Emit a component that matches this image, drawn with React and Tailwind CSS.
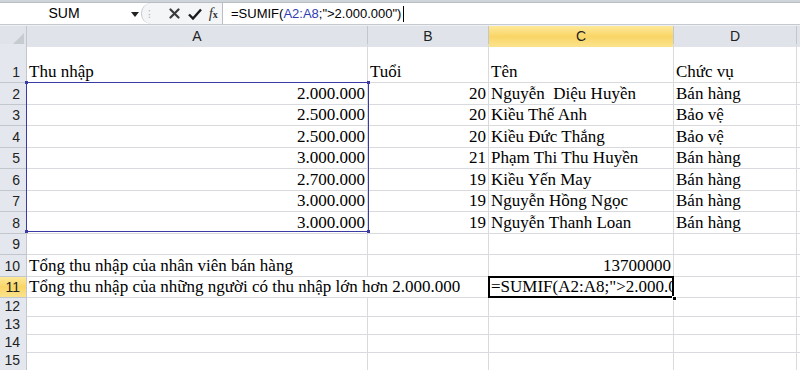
import React from 'react';

const COLS = 'grid grid-cols-[27px_341px_121px_185px_123px_1fr]';
const serif = { fontFamily: '"Liberation Serif", "Times New Roman", serif' };
const sans = { fontFamily: '"Liberation Sans", Arial, sans-serif' };

const rows = [
  { n: 1, h: 'h-[39px]', a: 'Thu nhập', b: 'Tuổi', bLeft: true, c: 'Tên', d: 'Chức vụ', aLeft: true },
  { n: 2, a: '2.000.000', b: '20', c: 'Nguyễn  Diệu Huyền', d: 'Bán hàng' },
  { n: 3, a: '2.500.000', b: '20', c: 'Kiều Thế Anh', d: 'Bảo vệ' },
  { n: 4, a: '2.500.000', b: '20', c: 'Kiều Đức Thắng', d: 'Bảo vệ' },
  { n: 5, a: '3.000.000', b: '21', c: 'Phạm Thi Thu Huyền', d: 'Bán hàng' },
  { n: 6, a: '2.700.000', b: '19', c: 'Kiều Yến May', d: 'Bán hàng' },
  { n: 7, a: '3.000.000', b: '19', c: 'Nguyễn Hồng Ngọc', d: 'Bán hàng' },
  { n: 8, a: '3.000.000', b: '19', c: 'Nguyễn Thanh Loan', d: 'Bán hàng' },
  { n: 9 },
  { n: 10, a: 'Tổng thu nhập của nhân viên bán hàng', aLeft: true, c: '13700000', cRight: true },
];

const Cell = ({ children, right, className = '' }) => (
  <div
    className={`border-r border-b border-[#d8dadd] flex items-end overflow-hidden whitespace-pre text-[17px] leading-[19px] text-black px-[2px] pb-[1px] ${right ? 'justify-end' : 'justify-start'} ${className}`}
    style={serif}
  >
    {children}
  </div>
);

const RowHead = ({ n, active }) => (
  <div
    className={`border-r border-b border-[#c2c7ce] flex items-end justify-end pr-[6px] pb-[1px] text-[14px] leading-[17px] text-[#222] ${active ? 'bg-gradient-to-b from-[#fde999] via-[#f9d565] to-[#fbe38c]' : 'bg-[#e4e8ee]'}`}
    style={sans}
  >
    {n}
  </div>
);

const ColHead = ({ label, active }) => (
  <div
    className={`border-r border-[#c2c7ce] flex items-center justify-center text-[14px] text-[#222] ${active ? 'bg-gradient-to-b from-[#fde999] via-[#f9d565] to-[#fbe38c]' : 'bg-[#e0e4ea]'}`}
    style={sans}
  >
    {label}
  </div>
);

function FormulaBar() {
  return (
    <div className="bg-white">
      <div className="h-[3px] bg-[#cfd4da] border-b border-[#b9bec5]" />
      <div className="flex h-[21px] items-stretch">
        <div className="w-[141px] flex items-center relative bg-white">
          <span className="w-[128px] text-center text-[14px] text-black" style={sans}>SUM</span>
          <svg width="8" height="5" viewBox="0 0 8 5" className="absolute left-[131px] top-[9px]">
            <path d="M0 0 L8 0 L4 5 Z" fill="#222" />
          </svg>
        </div>
        <div className="w-[81px] flex items-center bg-[#f4f5f7] border-l border-[#c5cad0] rounded-l-[10px] relative">
          <span className="ml-[6px] text-[10px] text-[#b0b4ba] leading-none">⁝</span>
          <svg width="11" height="11" viewBox="0 0 11 11" className="ml-[18px]">
            <path d="M1.5 1.5 L9.5 9.5 M9.5 1.5 L1.5 9.5" stroke="#3a3a3a" strokeWidth="2.2" strokeLinecap="round" />
          </svg>
          <svg width="14" height="12" viewBox="0 0 14 12" className="ml-[8px]">
            <path d="M1 6.5 L5 10.5 L13 1.5" stroke="#1a1a1a" strokeWidth="2.4" fill="none" />
          </svg>
          <span className="ml-[7px] italic text-[15px] leading-none text-[#333]" style={serif}>
            f<span className="text-[10px] not-italic font-bold">x</span>
          </span>
        </div>
        <div className="flex-1 border-l border-[#b9bec5] flex items-center pl-[8px] relative">
          <span className="text-[13px] text-black whitespace-pre" style={sans}>
            =SUMIF(<span className="text-[#2e3db5]">A2:A8</span>;"&gt;2.000.000")
          </span>
          <span className="w-px h-[16px] bg-black ml-[2px]" />
        </div>
      </div>
      <div className="h-px bg-[#c5cad0]" />
    </div>
  );
}

export default function App() {
  return (
    <div className="w-[800px] h-[370px] overflow-hidden bg-white">
      <FormulaBar />
      <div className="h-[1px] bg-[#eef0f3]" />
      <div className={`${COLS} h-[18px] border-b border-[#b5bbc3]`}>
        <div className="border-r border-[#c2c7ce] bg-[#e0e4ea] relative">
          <svg width="12" height="12" viewBox="0 0 12 12" className="absolute right-[2px] bottom-[2px]">
            <path d="M12 0 L12 12 L0 12 Z" fill="#c6cbd2" />
          </svg>
        </div>
        <ColHead label="A" />
        <ColHead label="B" />
        <ColHead label="C" active />
        <ColHead label="D" />
        <div className="bg-[#e0e4ea]" />
      </div>

      <div className="relative">
        {rows.map((r) => (
          <div key={r.n} className={`${COLS} ${r.h || 'h-[21.5px]'}`}>
            <RowHead n={r.n} />
            <Cell right={!r.aLeft}>{r.a}</Cell>
            <Cell right={!r.bLeft}>{r.b}</Cell>
            <Cell right={r.cRight}>{r.c}</Cell>
            <Cell>{r.d}</Cell>
            <Cell />
          </div>
        ))}

        <div className="grid grid-cols-[27px_462px_185px_123px_1fr] h-[21.5px]">
          <RowHead n={11} active />
          <Cell>Tổng thu nhập của những người có thu nhập lớn hơn 2.000.000</Cell>
          <div className="relative">
            <Cell className="h-full">=SUMIF(A2:A8;"&gt;2.000.0</Cell>
            <div className="absolute left-[-1px] top-[-1px] right-0 bottom-0 border-2 border-black" />
            <div className="absolute right-[-3px] bottom-[-3px] w-[5px] h-[5px] bg-black border border-white" />
          </div>
          <Cell />
          <Cell />
        </div>

        {[12, 13, 14, 15].map((n) => (
          <div key={n} className={`${COLS} h-[18px]`}>
            <RowHead n={n} />
            <Cell />
            <Cell />
            <Cell />
            <Cell />
            <Cell />
          </div>
        ))}

        <div className="absolute left-[26px] top-[38px] w-[343px] h-[150px] border border-[#3b3ba6] pointer-events-none">
          <div className="absolute left-[-2px] top-[-2px] w-[3px] h-[3px] bg-[#3b3ba6]" />
          <div className="absolute right-[-2px] top-[-2px] w-[3px] h-[3px] bg-[#3b3ba6]" />
          <div className="absolute left-[-2px] bottom-[-2px] w-[3px] h-[3px] bg-[#3b3ba6]" />
          <div className="absolute right-[-2px] bottom-[-2px] w-[3px] h-[3px] bg-[#3b3ba6]" />
        </div>
      </div>
    </div>
  );
}
